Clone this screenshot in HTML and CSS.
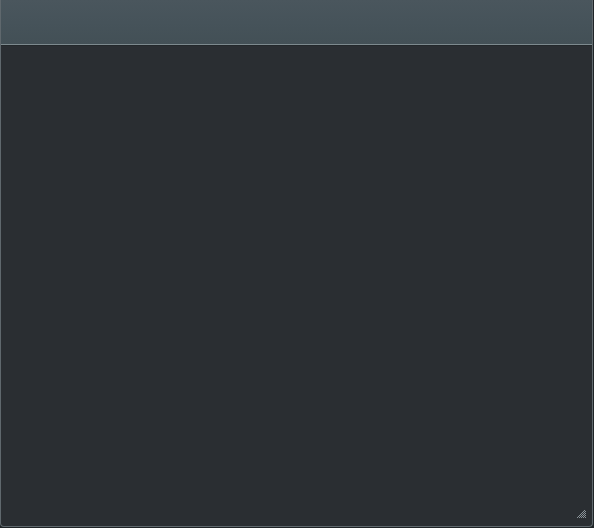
FILE: index.html
```html
<!DOCTYPE html>
<html>
<head>
<meta charset="utf-8">
<link rel="stylesheet" href="styles.css">
</head>
<body>
<div class="window">
  <div class="titlebar"></div>
  <div class="content">
    <svg class="grip" width="9" height="9" viewBox="0 0 9 9">
      <g fill="#8a9398">
        <rect x="7" y="0" width="1" height="1"/>
        <rect x="6" y="1" width="1" height="1"/><rect x="8" y="1" width="1" height="1"/>
        <rect x="5" y="2" width="1" height="1"/><rect x="7" y="2" width="1" height="1"/>
        <rect x="4" y="3" width="1" height="1"/><rect x="6" y="3" width="1" height="1"/><rect x="8" y="3" width="1" height="1"/>
        <rect x="3" y="4" width="1" height="1"/><rect x="5" y="4" width="1" height="1"/><rect x="7" y="4" width="1" height="1"/>
        <rect x="2" y="5" width="1" height="1"/><rect x="4" y="5" width="1" height="1"/><rect x="6" y="5" width="1" height="1"/><rect x="8" y="5" width="1" height="1"/>
        <rect x="1" y="6" width="1" height="1"/><rect x="3" y="6" width="1" height="1"/><rect x="5" y="6" width="1" height="1"/><rect x="7" y="6" width="1" height="1"/>
        <rect x="0" y="7" width="1" height="1"/><rect x="2" y="7" width="1" height="1"/><rect x="4" y="7" width="1" height="1"/><rect x="6" y="7" width="1" height="1"/><rect x="8" y="7" width="1" height="1"/>
      </g>
    </svg>
  </div>
</div>
<div class="desk"></div>
</body>
</html>
```
FILE: styles.css
```css
html, body {
  margin: 0;
  padding: 0;
  background: #1f2427;
  width: 594px;
  height: 528px;
  overflow: hidden;
}
.window {
  box-sizing: border-box;
  width: 593px;
  height: 527px;
  border: 1px solid #5f686d;
  border-top: none;
  border-radius: 0 0 4px 4px;
  background: #2a2e32;
  display: flex;
  flex-direction: column;
  overflow: hidden;
}
.titlebar {
  height: 44px;
  flex: none;
  background: linear-gradient(to bottom, #4a565d 0%, #46535a 50%, #435056 100%);
  border-bottom: 1px solid #7d8a8e;
  box-shadow: 0 1px 0 #23282b;
}
.content {
  flex: 1;
  display: flex;
  justify-content: flex-end;
  align-items: flex-end;
  padding: 0 6px 7px 0;
}
.grip {
  display: block;
}
.desk {
  height: 1px;
  background: #1f2427;
}
```
